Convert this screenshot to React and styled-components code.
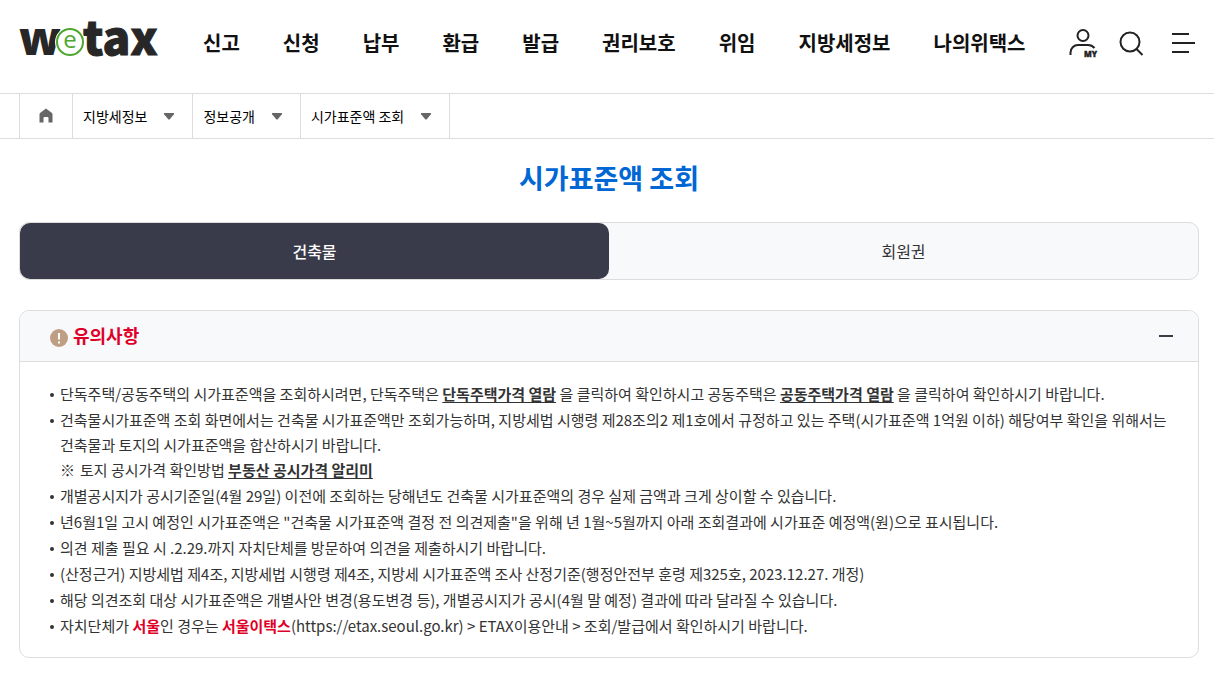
import React, { useState } from 'react';
import styled, { createGlobalStyle } from 'styled-components';

const GlobalStyle = createGlobalStyle`
  *, *::before, *::after { box-sizing: border-box; }
  body {
    margin: 0;
    background: #fff;
    color: #333;
    font-family: "Noto Sans CJK KR", "Noto Sans", sans-serif;
    font-size: 14px;
    word-break: keep-all;
  }
  button { font: inherit; color: inherit; border: 0; padding: 0; background: none; cursor: pointer; }
  a { color: inherit; text-decoration: none; }
  ul { list-style: none; margin: 0; padding: 0; }
  svg { display: block; }
`;

const Header = styled.header`
  display: flex;
  align-items: center;
  height: 94px;
  padding: 0 18px 8px 19px;
  border-bottom: 1px solid #ddd;
`;

const Logo = styled.a`
  flex: none;
  margin-right: 40px;
`;

const MainNav = styled.nav`
  flex: 1;
  display: flex;
  gap: 43px;
  color: #111;
  font-size: 20px;
  font-weight: 700;
  line-height: 28px;
  white-space: nowrap;
`;

const Tools = styled.div`
  display: flex;
  align-items: center;
  gap: 20px;
`;

const MenuButton = styled.button`
  && { padding-left: 8px; }
`;

const Crumbs = styled.nav`
  display: flex;
  height: 45px;
  padding-left: 19px;
  border-bottom: 1px solid #ddd;
`;

const HomeLink = styled.a`
  display: flex;
  align-items: center;
  justify-content: center;
  width: 54px;
  border: solid #ddd;
  border-width: 0 1px;
`;

const Crumb = styled.button`
  display: flex;
  align-items: center;
  gap: 16px;
  padding: 0 17px 0 10px;
  border-right: 1px solid #ddd;
  color: #000;
`;

const Main = styled.main`
  padding: 0 15px 18px 19px;
`;

const Title = styled.h1`
  margin: 18px 0 24px;
  color: #0067d5;
  font-size: 27px;
  font-weight: 700;
  line-height: 41px;
  text-align: center;
`;

const TabList = styled.div`
  display: flex;
  height: 58px;
  border: 1px solid #ddd;
  border-radius: 10px;
  background: #f8f9fb;
`;

const Tab = styled.button`
  flex: 1;
  border-radius: 10px;
  font-size: 16px;
  font-weight: ${(p) => (p.$active ? 500 : 400)};
  color: ${(p) => (p.$active ? '#fff' : '#333')};
  background: ${(p) => (p.$active ? '#3a3b4a' : 'transparent')};
`;

const Panel = styled.section`
  margin-top: 30px;
  border: 1px solid #ddd;
  border-radius: 10px;
  overflow: hidden;
`;

const PanelHead = styled.button`
  display: flex;
  align-items: center;
  gap: 5px;
  width: 100%;
  height: 51px;
  padding: 0 25px 0 30px;
  border-bottom: 1px solid #ddd;
  background: #f8f9fb;
`;

const PanelTitle = styled.span`
  flex: 1;
  padding-bottom: 2px;
  color: #df0029;
  font-size: 18px;
  font-weight: 700;
  line-height: 26px;
  text-align: left;
`;

const Notes = styled.ul`
  display: grid;
  gap: 1px;
  padding: 19px 29px 19px 30px;
  font-size: 15px;
  line-height: 25px;
`;

const Note = styled.li`
  display: grid;
  grid-template-columns: 10px 1fr;

  &::before {
    content: "";
    width: 4px;
    height: 4px;
    margin-top: 12px;
    border-radius: 50%;
    background: #333;
  }
`;

const SubNote = styled.div`
  display: grid;
  grid-template-columns: 20px 1fr;
`;

const TextLink = styled.a`
  font-weight: 700;
  text-decoration: underline;
  text-underline-offset: 2px;
`;

const Red = styled.strong`
  color: #df0029;
  font-weight: 700;
`;

const menus = ['신고', '신청', '납부', '환급', '발급', '권리보호', '위임', '지방세정보', '나의위택스'];
const crumbs = ['지방세정보', '정보공개', '시가표준액 조회'];

const LogoArt = () => (
  <svg width="144" height="84" viewBox="0 -22 144 84" role="img" aria-label="wetax">
    <g fill="#272727">
      <text x="0" y="32" fontFamily='"Open Sans", sans-serif' fontWeight="800" fontSize="46">w</text>
      <text x="64" y="32" stroke="#272727" fontFamily='"Noto Sans CJK KR", sans-serif' fontWeight="900" fontSize="46">tax</text>
    </g>
    <circle cx="51" cy="19" r="13" fill="none" stroke="#fff" strokeWidth="4" />
    <circle cx="51" cy="19" r="13" fill="none" stroke="#4ea72e" strokeWidth="2" />
    <text x="51" y="25" textAnchor="middle" fill="#4ea72e" fontFamily='"Open Sans", sans-serif' fontSize="24">e</text>
  </svg>
);

const UserIcon = () => (
  <svg width="30" height="32" viewBox="0 0 30 32" fill="none" stroke="#222" strokeWidth="2">
    <circle cx="15" cy="8.500" r="5.500" />
    <path d="M2.500 28v-2.500a7.500 7.500 0 0 1 7.500-7.500h10c2.600 0 4.800 1 6.500 3" />
    <text x="16" y="30" fill="#222" stroke="#222" strokeWidth="0.400" fontFamily='"Open Sans", sans-serif' fontWeight="800" fontSize="8">MY</text>
  </svg>
);

const SearchIcon = () => (
  <svg width="26" height="28" viewBox="0 0 26 28" fill="none" stroke="#222" strokeWidth="2">
    <circle cx="12" cy="13" r="9.500" />
    <path d="M18 19.500l6.500 6.500" />
  </svg>
);

const MenuIcon = () => (
  <svg width="24" height="22" viewBox="0 0 24 22" stroke="#222" strokeWidth="2">
    <path d="M0 2h17M0 11h23M0 20h17" />
  </svg>
);

const HomeIcon = () => (
  <svg width="14" height="17" viewBox="0 0 14 17" fill="#666">
    <path d="M7 0.500L13 5Q13.500 5.500 13.500 6.500V14.500H9.500V10Q9.500 9 8.500 9H5.500Q4.500 9 4.500 10V14.500H0.500V6.500Q0.500 5.500 1 5Z" />
  </svg>
);

const ArrowIcon = () => (
  <svg width="12" height="8" viewBox="0 0 12 8" fill="#666">
    <path d="M1.700 1H10.300Q11.600 1 10.900 2.200L7 7Q6 8 5 7L1.100 2.200Q0.400 1 1.700 1Z" />
  </svg>
);

const AlertIcon = () => (
  <svg width="18" height="22" viewBox="0 0 18 22">
    <circle cx="9" cy="13" r="9" fill="#bf9f83" />
    <path d="M9 8v6.500M9 16.500v2" stroke="#fff" strokeWidth="2" />
  </svg>
);

const ToggleIcon = ({ open }) => (
  <svg width="14" height="14" viewBox="0 0 14 14" stroke="#3b3b4a" strokeWidth="2">
    <path d={open ? 'M0 7h14' : 'M0 7h14M7 0v14'} />
  </svg>
);

export default function App() {
  const [tab, setTab] = useState('건축물');
  const [open, setOpen] = useState(true);

  return (
    <>
      <GlobalStyle />
      <Header>
        <Logo href="#"><LogoArt /></Logo>
        <MainNav>
          {menus.map((m) => <a href="#" key={m}>{m}</a>)}
        </MainNav>
        <Tools>
          <button type="button" aria-label="MY"><UserIcon /></button>
          <button type="button" aria-label="검색"><SearchIcon /></button>
          <MenuButton type="button" aria-label="전체메뉴"><MenuIcon /></MenuButton>
        </Tools>
      </Header>
      <Crumbs>
        <HomeLink href="#" aria-label="홈"><HomeIcon /></HomeLink>
        {crumbs.map((c) => (
          <Crumb type="button" key={c}>{c}<ArrowIcon /></Crumb>
        ))}
      </Crumbs>
      <Main>
        <Title>시가표준액 조회</Title>
        <TabList role="tablist">
          {['건축물', '회원권'].map((t) => (
            <Tab type="button" role="tab" key={t} aria-selected={tab === t} $active={tab === t} onClick={() => setTab(t)}>{t}</Tab>
          ))}
        </TabList>
        <Panel>
          <PanelHead type="button" aria-expanded={open} onClick={() => setOpen(!open)}>
            <AlertIcon />
            <PanelTitle>유의사항</PanelTitle>
            <ToggleIcon open={open} />
          </PanelHead>
          {open && (
            <Notes>
              <Note><div>단독주택/공동주택의 시가표준액을 조회하시려면, 단독주택은 <TextLink href="#">단독주택가격 열람</TextLink> 을 클릭하여 확인하시고 공동주택은 <TextLink href="#">공동주택가격 열람</TextLink> 을 클릭하여 확인하시기 바랍니다.</div></Note>
              <Note>
                <div>
                  건축물시가표준액 조회 화면에서는 건축물 시가표준액만 조회가능하며, 지방세법 시행령 제28조의2 제1호에서 규정하고 있는 주택(시가표준액 1억원 이하) 해당여부 확인을 위해서는 건축물과 토지의 시가표준액을 합산하시기 바랍니다.
                  <SubNote><span>※</span><div>토지 공시가격 확인방법 <TextLink href="#">부동산 공시가격 알리미</TextLink></div></SubNote>
                </div>
              </Note>
              <Note><div>개별공시지가 공시기준일(4월 29일) 이전에 조회하는 당해년도 건축물 시가표준액의 경우 실제 금액과 크게 상이할 수 있습니다.</div></Note>
              <Note><div>년6월1일 고시 예정인 시가표준액은 "건축물 시가표준액 결정 전 의견제출"을 위해 년 1월~5월까지 아래 조회결과에 시가표준 예정액(원)으로 표시됩니다.</div></Note>
              <Note><div>의견 제출 필요 시 .2.29.까지 자치단체를 방문하여 의견을 제출하시기 바랍니다.</div></Note>
              <Note><div>(산정근거) 지방세법 제4조, 지방세법 시행령 제4조, 지방세 시가표준액 조사 산정기준(행정안전부 훈령 제325호, 2023.12.27. 개정)</div></Note>
              <Note><div>해당 의견조회 대상 시가표준액은 개별사안 변경(용도변경 등), 개별공시지가 공시(4월 말 예정) 결과에 따라 달라질 수 있습니다.</div></Note>
              <Note><div>자치단체가 <Red>서울</Red>인 경우는 <Red>서울이택스</Red>(https://etax.seoul.go.kr) &gt; ETAX이용안내 &gt; 조회/발급에서 확인하시기 바랍니다.</div></Note>
            </Notes>
          )}
        </Panel>
      </Main>
    </>
  );
}
